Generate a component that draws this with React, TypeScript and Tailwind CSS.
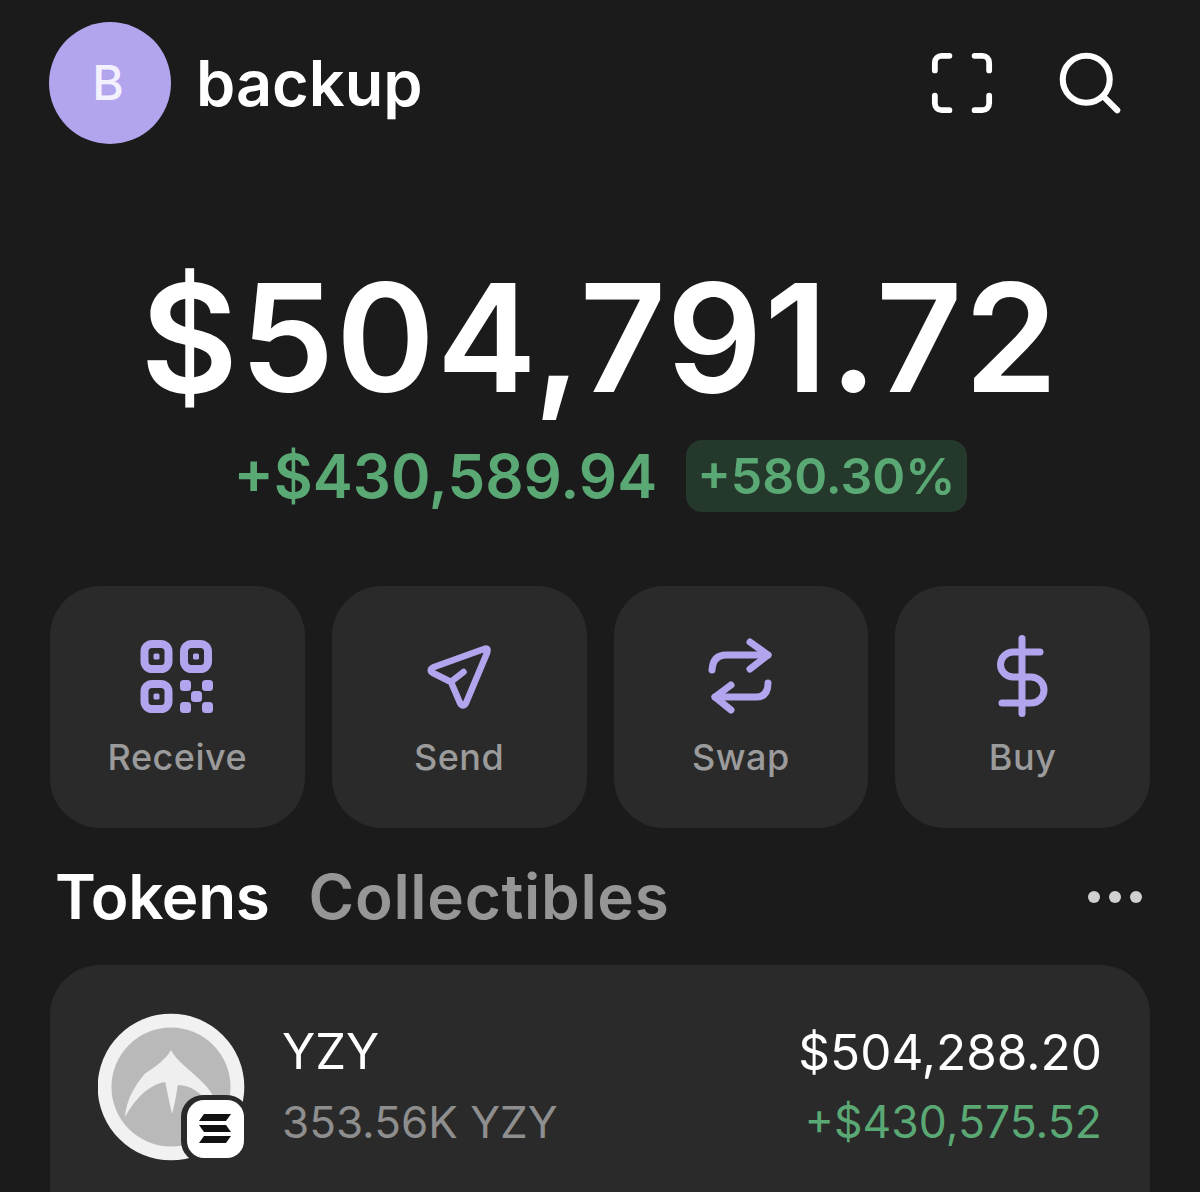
import type { ReactNode } from "react";

function ScanIcon() {
    return (
        <svg width="64" height="64" viewBox="0 0 66 66" fill="none" stroke="#fff" strokeWidth="6" strokeLinecap="round" strokeLinejoin="round">
            <path d="M5 20V12a7 7 0 0 1 7-7h8" />
            <path d="M46 5h8a7 7 0 0 1 7 7v8" />
            <path d="M61 46v8a7 7 0 0 1-7 7h-8" />
            <path d="M20 61h-8a7 7 0 0 1-7-7v-8" />
        </svg>
    );
}

function SearchIcon() {
    return (
        <svg width="62" height="62" viewBox="0 0 66 66" fill="none" stroke="#fff" strokeWidth="6.5" strokeLinecap="round">
            <circle cx="29" cy="29" r="25" />
            <path d="M48 48l14 14" />
        </svg>
    );
}

function QrIcon() {
    return (
        <svg width="90" height="90" viewBox="0 0 90 90" fill="none">
            <g stroke="#b3a4ee" strokeWidth="8">
                <rect x="12.5" y="12" width="24" height="25" rx="7.5" />
                <rect x="52" y="12" width="24" height="25" rx="7.5" />
                <rect x="12.5" y="52" width="24" height="25" rx="7.5" />
            </g>
            <g fill="#b3a4ee">
                <rect x="21.5" y="21.5" width="6" height="6" rx="1.5" />
                <rect x="61" y="21.5" width="6" height="6" rx="1.5" />
                <rect x="21.5" y="61.5" width="6" height="6" rx="1.5" />
                <rect x="48" y="48" width="11" height="11" rx="3.5" />
                <rect x="70" y="48" width="11" height="11" rx="3.5" />
                <rect x="59" y="59" width="11" height="11" rx="3.5" />
                <rect x="48" y="70" width="11" height="11" rx="3.5" />
                <rect x="70" y="70" width="11" height="11" rx="3.5" />
            </g>
        </svg>
    );
}

function SendIcon() {
    return (
        <svg width="90" height="90" viewBox="0 0 90 90" fill="none" stroke="#b3a4ee" strokeWidth="6.5" strokeLinecap="round" strokeLinejoin="round">
            <path d="M70 17L20 35Q14 38 19 41L37 50L46 71Q49 76 52 71L73 21Q75 15 70 17Z" />
            <path d="M49.5 40L38 49" />
        </svg>
    );
}

function SwapIcon() {
    return (
        <svg width="90" height="90" viewBox="0 0 90 90" fill="none" stroke="#b3a4ee" strokeWidth="7" strokeLinecap="round" strokeLinejoin="round">
            <path d="M54 10L72 23L54 37" />
            <path d="M72 23H30Q17 23 16 38" />
            <path d="M35 53L19 65L35 78" />
            <path d="M19 65H60Q72 65 72 51" />
        </svg>
    );
}

function DollarIcon() {
    return (
        <svg width="90" height="90" viewBox="0 0 90 90" fill="none" stroke="#b3a4ee" strokeWidth="7" strokeLinecap="round" strokeLinejoin="round">
            <path d="M44 6.5V81.5" />
            <path d="M62 20H35a12.5 12.5 0 0 0 0 25H53a13 13 0 0 1 0 26H24" />
        </svg>
    );
}

function ActionCard({ icon, label }: { icon: ReactNode; label: string }) {
    return (
        <div className="h-[242px] rounded-[50px] bg-[#2a2a2a] flex flex-col items-center pt-[46px]">
            {icon}
            <span className="mt-[10px] text-[36px] leading-[50px] tracking-[0.5px] font-medium text-[#9b9b9b]">{label}</span>
        </div>
    );
}

function TokenLogo() {
    return (
        <div className="relative w-[148px] h-[148px] shrink-0">
            <svg width="148" height="148" viewBox="55 35 440 440">
                <circle cx="272" cy="255" r="218" fill="#f1f1f1" />
                <circle cx="272" cy="255" r="177" fill="#b9b9b9" />
                <path
                    d="M272 145C285 175 330 205 370 245C395 270 410 300 415 345C385 290 335 245 292 250C288 280 282 310 275 335C268 305 262 275 255 240C215 245 170 280 135 345C140 290 165 250 195 215C225 195 255 175 272 145Z"
                    fill="#efefef"
                />
            </svg>
            <div className="absolute right-[-3px] bottom-[-2px] w-[68px] h-[68px] rounded-[22px] bg-[#2a2a2a] flex items-center justify-center">
                <div className="w-[57px] h-[58px] rounded-[17px] bg-white flex items-center justify-center">
                    <svg width="32" height="30" viewBox="0 0 32 30" fill="#111">
                        <path d="M5 0H32L27 7H0Z" />
                        <path d="M0 11H27L32 18H5Z" />
                        <path d="M5 22H32L27 29H0Z" />
                    </svg>
                </div>
            </div>
        </div>
    );
}

export default function App() {
    return (
        <div className="w-[1200px] h-[1192px] overflow-hidden bg-[#1b1b1b] font-['Inter',sans-serif] text-white">
            <header className="flex items-center justify-between pl-[49px] pr-[79px] pt-[22px]">
                <div className="flex items-center gap-[25px]">
                    <div className="w-[122px] h-[122px] rounded-full bg-[#b3a4ee] flex items-center justify-center pr-[4px] text-[48px] font-medium text-[#f4f1ff]">
                        B
                    </div>
                    <span className="text-[63px] leading-[72px] font-semibold">backup</span>
                </div>
                <div className="flex items-center gap-[65px]">
                    <ScanIcon />
                    <SearchIcon />
                </div>
            </header>

            <section className="mt-[103px] flex flex-col items-center">
                <div className="text-[150px] leading-[182px] tracking-[1.8px] font-semibold">$504,791.72</div>
                <div className="mt-[11px] flex items-center gap-[29px]">
                    <span className="text-[60px] leading-[72px] font-semibold text-[#5aa874]">+$430,589.94</span>
                    <span className="h-[72px] px-[11px] rounded-[16px] bg-[#24392c] text-[50px] leading-[72px] font-semibold text-[#5aa874]">
                        +580.30%
                    </span>
                </div>
            </section>

            <section className="mt-[74px] px-[50px] grid grid-cols-4 gap-[27px]">
                <ActionCard icon={<QrIcon />} label="Receive" />
                <ActionCard icon={<SendIcon />} label="Send" />
                <ActionCard icon={<SwapIcon />} label="Swap" />
                <ActionCard icon={<DollarIcon />} label="Buy" />
            </section>

            <section className="mt-[30px] pl-[55px] pr-[58px] flex items-center justify-between">
                <div className="flex items-center gap-[39px] text-[62px] leading-[78px] font-semibold">
                    <span className="tracking-[-0.3px]">Tokens</span>
                    <span className="tracking-[0.7px] text-[#969696]">Collectibles</span>
                </div>
                <div className="flex items-center gap-[9px]">
                    <span className="w-[12px] h-[12px] rounded-full bg-[#d0d0d0]" />
                    <span className="w-[12px] h-[12px] rounded-full bg-[#d0d0d0]" />
                    <span className="w-[12px] h-[12px] rounded-full bg-[#d0d0d0]" />
                </div>
            </section>

            <section className="mt-[29px] mx-[50px] h-[300px] rounded-[50px] bg-[#2a2a2a] pl-[48px] pr-[48px] pt-[48px]">
                <div className="flex items-center">
                    <TokenLogo />
                    <div className="ml-[36px] flex-1 flex flex-col gap-[8px]">
                        <span className="text-[49px] leading-[62px]">YZY</span>
                        <span className="text-[44px] leading-[62px] text-[#8e8e8e]">353.56K YZY</span>
                    </div>
                    <div className="flex flex-col items-end gap-[8px]">
                        <span className="text-[49.5px] leading-[62px]">$504,288.20</span>
                        <span className="text-[44.5px] leading-[62px] text-[#5aa874]">+$430,575.52</span>
                    </div>
                </div>
            </section>
        </div>
    );
}
